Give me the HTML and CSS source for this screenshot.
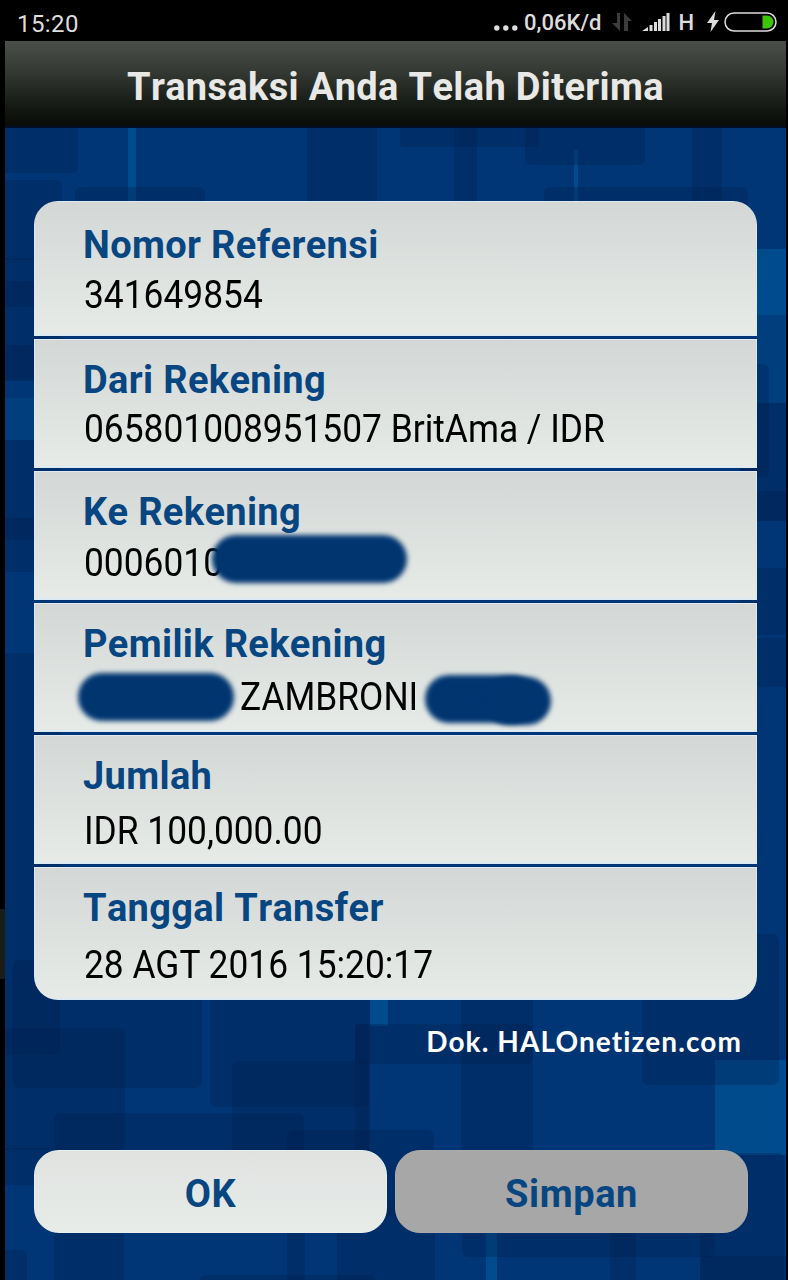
FILE: index.html
```
<!DOCTYPE html>
<html lang="id">
<head>
    <meta charset="UTF-8">
    <title>Transaksi Anda Telah Diterima</title>
    <link rel="stylesheet" href="styles.css">
</head>
<body>
    <div class="status-bar">
        <span class="clock">15:20</span>
        <div class="status-right">
            <svg class="dots" width="24" height="6" viewBox="0 0 24 6">
                <circle cx="2.8" cy="3" r="2.7"/>
                <circle cx="11.8" cy="3" r="2.7"/>
                <circle cx="20.8" cy="3" r="2.7"/>
            </svg>
            <span class="speed">0,06K/d</span>
            <svg class="arrows" width="20" height="20" viewBox="0 0 20 20">
                <path d="M8 1v18L0 11h5V1zM12 19V1l8 8h-4v10z"/>
            </svg>
            <svg class="signal" width="28" height="19" viewBox="0 0 28 19">
                <path d="M0 18l6-4v4zM7.500 12h3v6h-3zM12 9h3v9h-3zM16 6h3v12h-3zM20.500 3h3v15h-3zM24.500 0h3v18h-3z"/>
            </svg>
            <span class="network">H</span>
            <svg class="bolt" width="12" height="22" viewBox="0 0 12 22">
                <path d="M8.500 0L0 12h5L3.500 21 12 9H7z"/>
            </svg>
            <svg class="battery" width="53" height="20" viewBox="0 0 53 20">
                <rect x="1" y="1" width="51" height="18" rx="9" fill="none" stroke="#ddd" stroke-width="1.500"/>
                <path d="M38.500 3.500h4.500a6.500 6.500 0 0 1 0 13h-4.500z" fill="#3fc40c"/>
            </svg>
        </div>
    </div>

    <div class="screen">
        <svg class="pattern" width="781" height="1152" viewBox="5 128 781 1152">
            <rect x="5" y="128" width="781" height="1152" fill="#003676"/>
            <g fill="#004b8b">
                <rect x="128" y="128" width="8" height="74"/>
                <rect x="574" y="150" width="4" height="52"/>
                <rect x="757" y="249" width="29" height="66"/>
                <rect x="370" y="990" width="18" height="36"/>
                <rect x="715" y="1060" width="71" height="95"/>
                <rect x="486" y="1232" width="11" height="48"/>
            </g>
            <g fill="#003e7e">
                <rect x="757" y="315" width="29" height="88"/>
                <rect x="5" y="398" width="30" height="42"/>
            </g>
            <g fill="#001f4c" fill-opacity=".3">
                <rect x="-10" y="110" width="88" height="63" rx="6"/>
                <rect x="-10" y="180" width="72" height="80" rx="6"/>
                <rect x="75" y="187" width="130" height="60" rx="6"/>
                <rect x="307" y="120" width="70" height="100"/>
                <rect x="400" y="120" width="139" height="27" rx="4"/>
                <rect x="454" y="120" width="23" height="100"/>
                <rect x="525" y="110" width="120" height="55" rx="6"/>
                <rect x="692" y="120" width="30" height="100"/>
                <rect x="544" y="187" width="204" height="60" rx="6"/>
                <rect x="-10" y="258" width="70" height="122"/>
                <rect x="-10" y="281" width="70" height="26"/>
                <rect x="-10" y="345" width="70" height="36"/>
                <rect x="-10" y="440" width="70" height="132"/>
                <rect x="-10" y="518" width="70" height="22"/>
                <rect x="-10" y="653" width="70" height="402" rx="6"/>
                <rect x="740" y="364" width="29" height="114" rx="6"/>
                <rect x="740" y="403" width="60" height="88"/>
                <rect x="740" y="491" width="60" height="30"/>
                <rect x="740" y="491" width="60" height="30"/>
                <rect x="740" y="568" width="60" height="67"/>
                <rect x="740" y="638" width="60" height="49"/>
                <rect x="12" y="960" width="190" height="128" rx="7"/>
                <rect x="-10" y="1028" width="135" height="122" rx="6"/>
                <rect x="210" y="960" width="160" height="147" rx="7"/>
                <rect x="232" y="1061" width="138" height="120" rx="6"/>
                <rect x="355" y="1024" width="178" height="40" rx="6"/>
                <rect x="355" y="1024" width="14" height="130"/>
                <rect x="461" y="990" width="72" height="168"/>
                <rect x="642" y="934" width="137" height="151" rx="7"/>
                <rect x="54" y="1113" width="250" height="70" rx="7"/>
                <rect x="287" y="1130" width="147" height="86" rx="7"/>
                <rect x="-10" y="1148" width="60" height="37"/>
                <rect x="54" y="1225" width="70" height="60"/>
                <rect x="-10" y="1250" width="37" height="50" rx="6"/>
                <rect x="287" y="1225" width="18" height="60"/>
                <rect x="337" y="1200" width="98" height="90"/>
                <rect x="200" y="1275" width="175" height="20" rx="6"/>
                <rect x="462" y="1200" width="253" height="57" rx="6"/>
                <rect x="610" y="1225" width="26" height="60"/>
                <rect x="700" y="1153" width="84" height="140" rx="6"/>
                <rect x="700" y="1256" width="100" height="40" rx="6"/>
            </g>
        </svg>

        <h1 class="title"><span>Transaksi Anda Telah Diterima</span></h1>

        <div class="details">
            <div class="row row-first">
                <div class="label">Nomor Referensi</div>
                <div class="value">341649854</div>
            </div>
            <div class="row row-from">
                <div class="label">Dari Rekening</div>
                <div class="value">065801008951507 BritAma / IDR</div>
            </div>
            <div class="row row-to">
                <div class="label">Ke Rekening</div>
                <div class="value">0006010</div>
                <i class="mask mask-account"></i>
            </div>
            <div class="row row-owner">
                <div class="label">Pemilik Rekening</div>
                <div class="value">ZAMBRONI</div>
                <i class="mask mask-first"></i>
                <i class="mask mask-last"></i>
                <i class="mask mask-last-end"></i>
            </div>
            <div class="row row-amount">
                <div class="label">Jumlah</div>
                <div class="value">IDR 100,000.00</div>
            </div>
            <div class="row row-date">
                <div class="label">Tanggal Transfer</div>
                <div class="value">28 AGT 2016 15:20:17</div>
            </div>
        </div>

        <p class="credit">Dok. HALOnetizen.com</p>

        <div class="buttons">
            <button class="btn"><span>OK</span></button>
            <button class="btn btn-save"><span>Simpan</span></button>
        </div>
    </div>
    <i class="edge-handle"></i>
</body>
</html>
```
FILE: styles.css
```
* {
    box-sizing: border-box;
}
body {
    position: relative;
    margin: 0;
    width: 788px;
    height: 1280px;
    overflow: hidden;
    background: #000;
    font-family: Roboto, "Liberation Sans", sans-serif;
}
.status-bar {
    display: flex;
    justify-content: space-between;
    align-items: center;
    height: 41px;
    padding: 3px 11px 0 17px;
    color: #ddd;
}
.clock {
    font-size: 24px;
    letter-spacing: .4px;
    padding-top: 3px;
}
.status-right {
    display: flex;
    align-items: center;
    fill: #ddd;
}
.dots {
    margin: 11px 6px 0 0;
}
.speed {
    font-size: 22px;
    font-weight: 500;
}
.arrows {
    margin: 0 10px 0 11px;
    fill: #3c3c3c;
}
.network {
    margin: 0 13px 0 8px;
    font-size: 22px;
    font-weight: 500;
}
.battery {
    margin-left: 5px;
}
.screen {
    position: relative;
    width: 781px;
    height: 1239px;
    margin-left: 5px;
    overflow: hidden;
}
.pattern {
    position: absolute;
    top: 87px;
    left: 0;
    z-index: -1;
}
.title {
    height: 87px;
    margin: 0;
    padding-top: 1px;
    background: linear-gradient(#4b4f49, #353933 35%, #191d17 70%, #0a0d07 96%, #001030);
    color: #e8e9e6;
    font-size: 38px;
    font-weight: 700;
    font-kerning: none;
    letter-spacing: .35px;
    line-height: 90px;
    text-align: center;
}
.details {
    display: flex;
    flex-direction: column;
    gap: 3px;
    width: 723px;
    margin: 73px 0 0 29px;
    border-radius: 24px;
    overflow: hidden;
}
.row {
    position: relative;
    height: 129px;
    padding: 18px 0 0 49px;
    border: 1px solid #dcebf3;
    border-bottom-width: 2px;
    background: linear-gradient(#d3d8d6, #e6ebe8);
}
.row-first {
    height: 135px;
    padding-top: 20px;
}
.label {
    color: #084682;
    font-size: 38px;
    font-weight: 700;
    font-kerning: none;
    letter-spacing: .35px;
    line-height: 46px;
    margin: -1px 0 0 -1px;
}
.row-first .label {
    margin-top: 0;
}
.value {
    width: max-content;
    color: #000;
    font-size: 38px;
    line-height: 46px;
    margin-top: 4px;
    transform: scaleX(.93);
    transform-origin: 0 0;
}
.row-from .value {
    margin-top: 3px;
}
.row-to .value {
    margin-top: 5px;
}
.row-owner .value {
    margin: 7px 0 0 156px;
}
.row-amount .value {
    margin-top: 9px;
}
.row-date .value {
    margin-top: 11px;
}
.row-date {
    height: 133px;
}
.mask {
    position: absolute;
    height: 48px;
    border-radius: 24px;
    background: #003570;
    filter: blur(2.5px);
}
.mask-account {
    left: 177px;
    top: 63px;
    width: 195px;
}
.mask-first {
    left: 43px;
    top: 69px;
    width: 156px;
}
.mask-last {
    left: 390px;
    top: 71px;
    width: 112px;
}
.mask-last-end {
    left: 450px;
    top: 73px;
    width: 66px;
}
.credit {
    margin: 22px 44px 0 0;
    color: #fff;
    font-family: Lato, "Open Sans", sans-serif;
    font-size: 28px;
    font-weight: 700;
    letter-spacing: 1.1px;
    line-height: 38px;
    text-align: right;
}
.buttons {
    display: flex;
    gap: 8px;
    margin: 90px 0 0 29px;
}
.btn {
    width: 353px;
    height: 83px;
    padding: 4px 0 0;
    border: 1px solid #e8efef;
    border-radius: 25px;
    background: linear-gradient(#e0e2e0, #e7ece9);
    color: #084682;
    font-family: inherit;
    font-size: 38px;
    font-weight: 700;
    letter-spacing: .6px;
}
.btn-save {
    border-color: #aaacab;
    background: #a7a7a7;
}
/* drawer handle on the left screen edge */
.edge-handle {
    position: absolute;
    left: 0;
    top: 909px;
    width: 5px;
    height: 70px;
    background: #1b1c15;
}
```
